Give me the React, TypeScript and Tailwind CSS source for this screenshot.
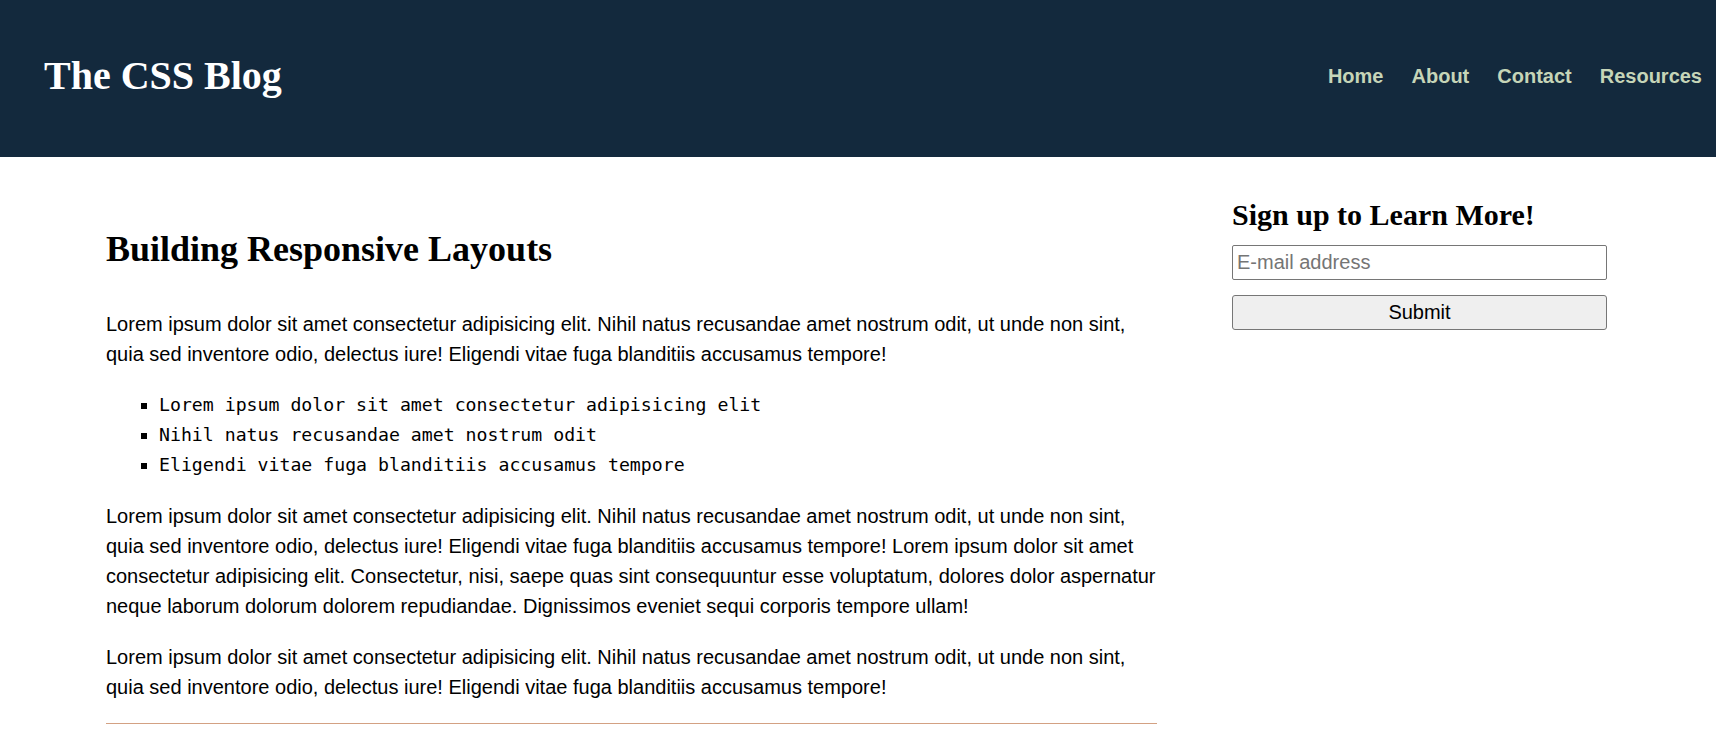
import React from 'react';

const navLinks = ['Home', 'About', 'Contact', 'Resources'];

const lorem =
  'Lorem ipsum dolor sit amet consectetur adipisicing elit. Nihil natus recusandae amet nostrum odit, ut unde non sint, quia sed inventore odio, delectus iure! Eligendi vitae fuga blanditiis accusamus tempore!';

const listItems = [
  'Lorem ipsum dolor sit amet consectetur adipisicing elit',
  'Nihil natus recusandae amet nostrum odit',
  'Eligendi vitae fuga blanditiis accusamus tempore',
];

const App: React.FC = () => {
  return (
    <div className="min-h-screen bg-white text-black font-['Liberation_Sans',Arial,sans-serif] text-[20px] leading-[30px]">
      <header className="h-[157px] bg-[#13293d] flex items-center justify-between pl-[44px] pr-[14px] pb-[5px]">
        <h1 className="font-['Liberation_Serif','Times_New_Roman',serif] font-bold text-[40px] leading-[1.15] text-white">
          The CSS Blog
        </h1>
        <nav>
          <ul className="flex gap-[28px]">
            {navLinks.map(link => (
              <li key={link}>
                <a href="#" className="font-bold text-[20px] leading-[23px] text-[#c6d5b8]">
                  {link}
                </a>
              </li>
            ))}
          </ul>
        </nav>
      </header>

      <div className="flex pl-[106px]">
        <main className="w-[1051px] pt-[72px]">
          <h2 className="font-['Liberation_Serif','Times_New_Roman',serif] font-bold text-[36px] leading-[1.15] mb-[39px]">
            Building Responsive Layouts
          </h2>
          <p>{lorem}</p>
          <ul className="mt-[21px] list-[square] pl-[53px] font-['DejaVu_Sans_Mono',monospace] text-[18.2px] leading-[30px]">
            {listItems.map(item => (
              <li key={item}>{item}</li>
            ))}
          </ul>
          <p className="mt-[21px]">
            {lorem} Lorem ipsum dolor sit amet consectetur adipisicing elit. Consectetur, nisi, saepe quas sint
            consequuntur esse voluptatum, dolores dolor aspernatur neque laborum dolorum dolorem repudiandae.
            Dignissimos eveniet sequi corporis tempore ullam!
          </p>
          <p className="mt-[21px]">{lorem}</p>
          <hr className="mt-[21px] border-0 border-t border-[#d3a183]" />
        </main>

        <aside className="w-[375px] ml-[75px] pt-[41px]">
          <h2 className="font-['Liberation_Serif','Times_New_Roman',serif] font-bold text-[30px] leading-[1.15] mb-[12px]">
            Sign up to Learn More!
          </h2>
          <form onSubmit={e => e.preventDefault()} className="flex flex-col">
            <input
              type="email"
              placeholder="E-mail address"
              className="h-[35px] w-full border border-[#767676] rounded-[2px] px-[4px] text-[20px] leading-[23px] placeholder:text-[#757575] outline-none"
            />
            <button
              type="submit"
              className="mt-[15px] h-[35px] w-full border border-[#767676] rounded-[3px] bg-[#efefef] text-[20px] leading-[23px] text-black"
            >
              Submit
            </button>
          </form>
        </aside>
      </div>
    </div>
  );
};

export default App;
